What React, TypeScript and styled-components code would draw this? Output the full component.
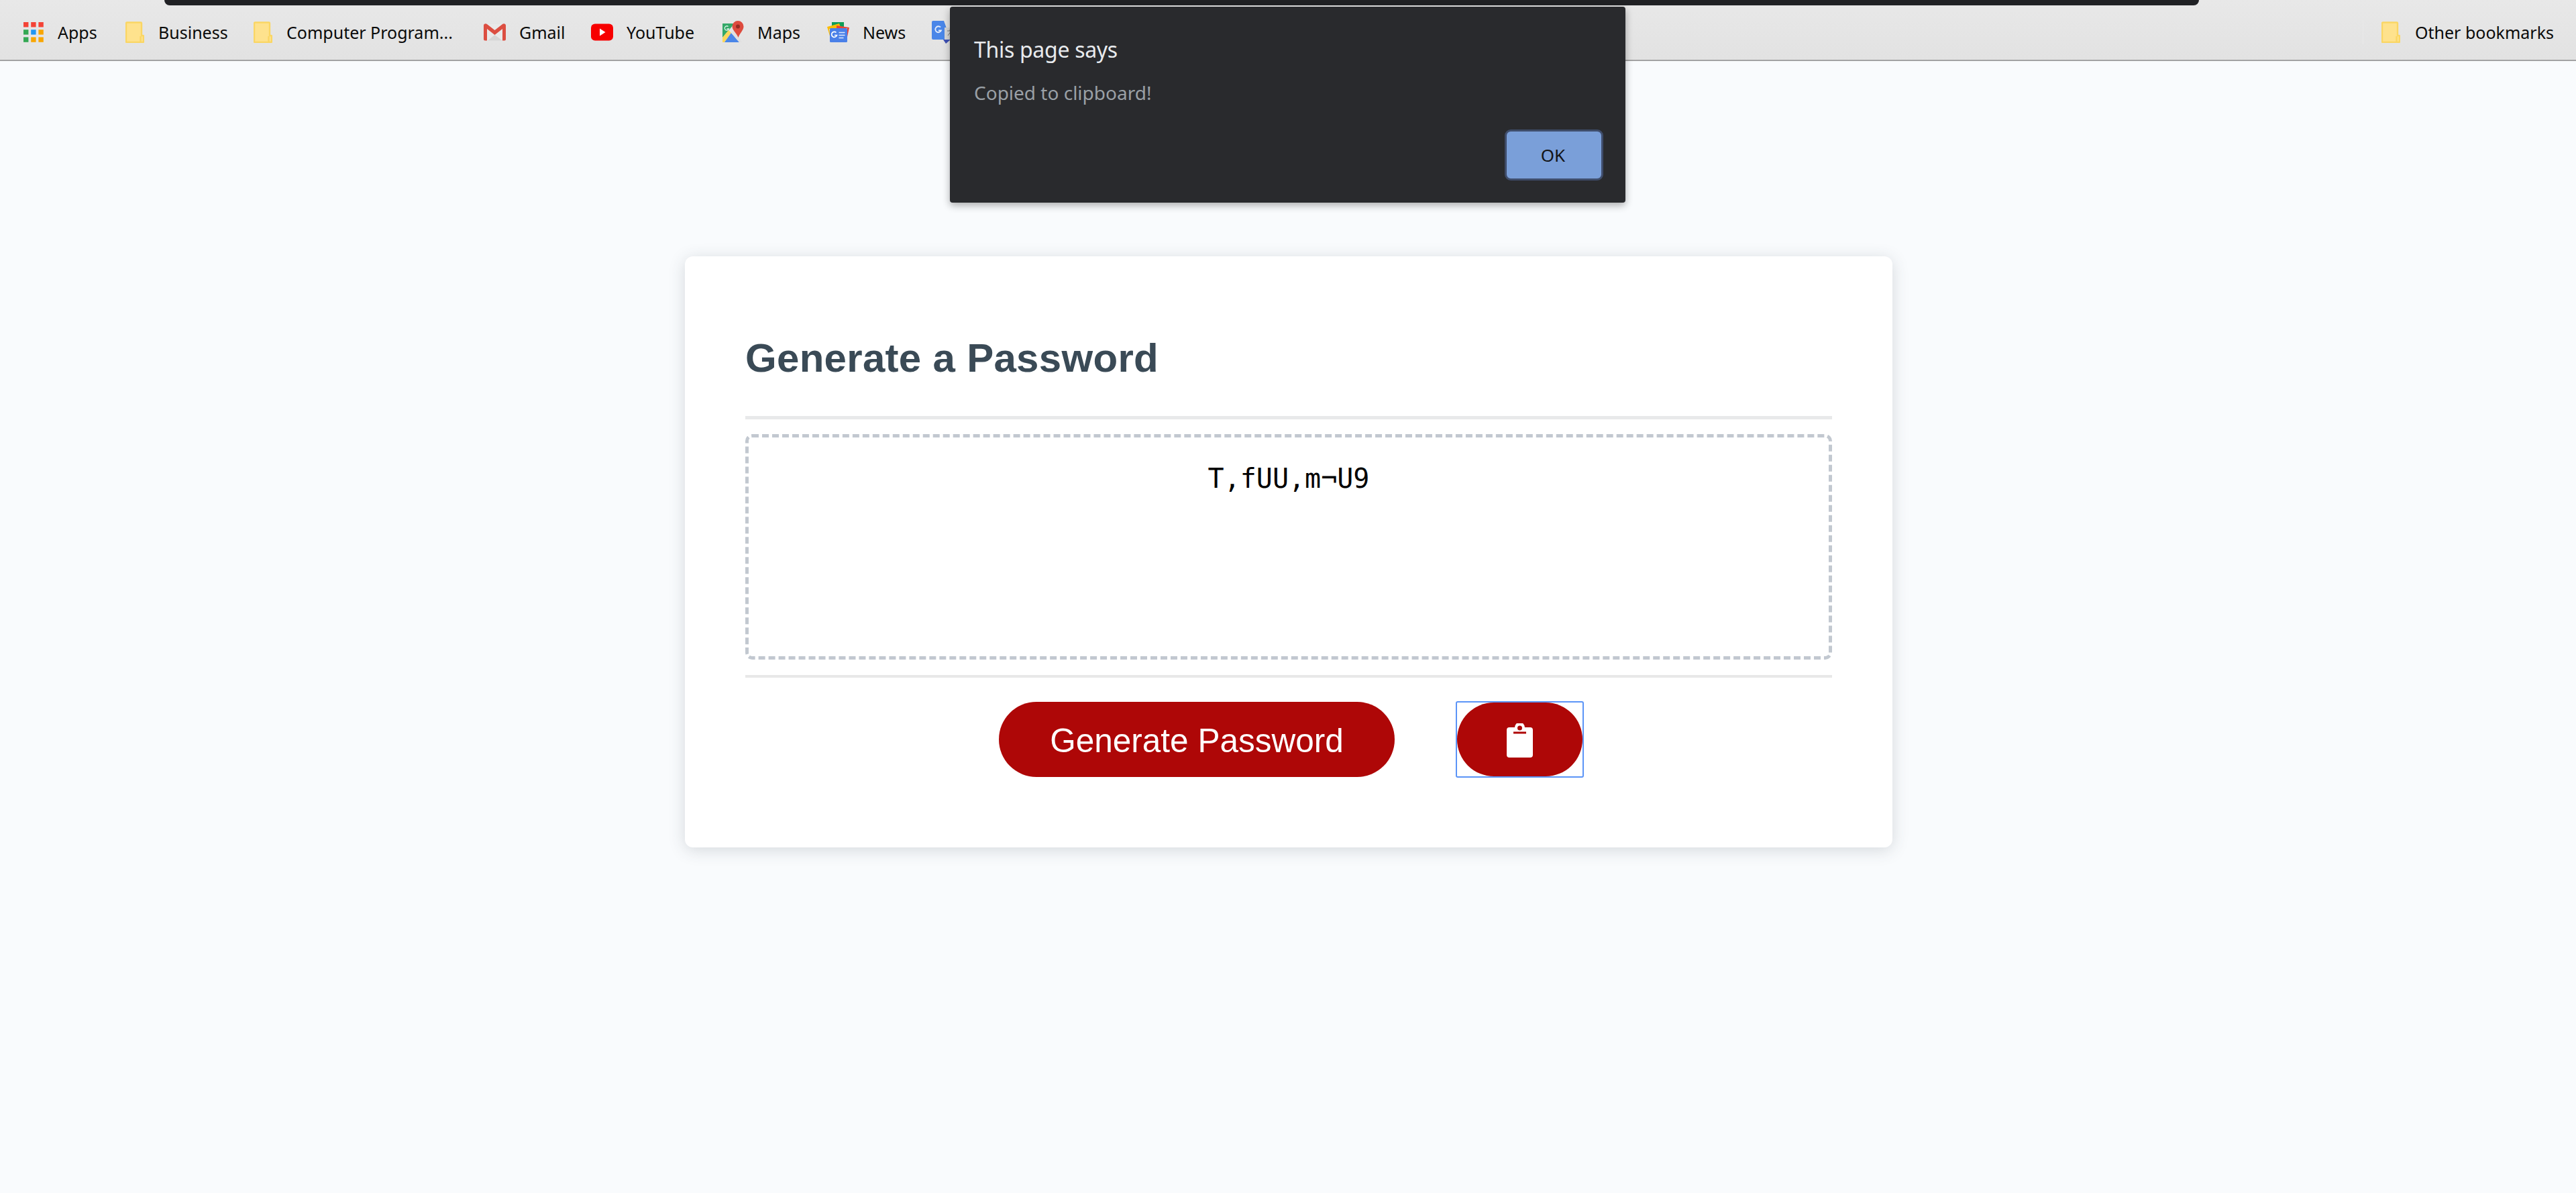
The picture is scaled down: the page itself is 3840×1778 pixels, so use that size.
import React from "react";
import styled, { createGlobalStyle } from "styled-components";

const Global = createGlobalStyle`
  html, body { margin: 0; padding: 0; background: #f9fbfd; }
  #root { min-height: 1778px; }
`;

const Page = styled.div`
  position: relative;
  width: 3840px;
  height: 1778px;
  overflow: hidden;
  background: #f9fbfd;
`;

const Chrome = styled.header`
  height: 89px;
  border-bottom: 2px solid #a3a3a3;
  background: linear-gradient(#e8e8e8, #e2e2e2);
  display: flex;
  flex-direction: column;
`;

const TabEdge = styled.div`
  height: 8px;
  margin: 0 562px 0 245px;
  background: #202124;
  border-radius: 0 0 24px 24px;
`;

const Bookmarks = styled.nav`
  flex: 1;
  display: flex;
  align-items: center;
  padding: 0 33px 2px 35px;
  font-family: "Noto Sans", "Open Sans", sans-serif;
  font-size: 25px;
  color: #0a0a0a;
`;

const Bookmark = styled.div<{ $gap?: number; $w?: number }>`
  display: flex;
  align-items: center;
  flex: none;
  width: ${(p) => p.$w}px;
  gap: ${(p) => p.$gap ?? 20}px;
  white-space: nowrap;
`;

const Label = styled.span`
  line-height: 32px;
`;

const Spacer = styled.div`
  flex: 1;
`;

const Separator = styled.div`
  width: 1px;
  height: 36px;
  background: #e9e9e9;
  margin-right: 27px;
`;

const Main = styled.main`
  display: flex;
  justify-content: center;
  padding: 291px 0 0 2px;
`;

const Card = styled.section`
  width: 1800px;
  height: 881px;
  box-sizing: border-box;
  padding: 115px 90px 0;
  background: #fff;
  border-radius: 12px;
  box-shadow: 0 4px 24px rgba(50, 60, 70, 0.18);
  display: flex;
  flex-direction: column;
`;

const Title = styled.h1`
  margin: 0;
  height: 128px;
  box-sizing: border-box;
  border-bottom: 5px solid #e8e9ea;
  font-family: "Liberation Sans", Arial, sans-serif;
  font-size: 60px;
  letter-spacing: 0.3px;
  line-height: 74px;
  font-weight: 700;
  color: #3a4a56;
`;

const PasswordBox = styled.div`
  margin-top: 22px;
  height: 336px;
  box-sizing: border-box;
  border: 5px dashed #c2c8d0;
  border-radius: 10px;
  padding-top: 38px;
  text-align: center;
  font-family: "DejaVu Sans Mono", "Liberation Mono", monospace;
  font-size: 40px;
  line-height: 47px;
  color: #000;
`;

const Rule = styled.hr`
  margin: 23px 0 0;
  height: 4px;
  border: none;
  background: #e8e8e8;
`;

const Actions = styled.div`
  margin-top: 35px;
  display: flex;
  justify-content: center;
  align-items: center;
  gap: 91px;
  padding-left: 8px;
`;

const Pill = styled.button<{ $w: number; $h: number }>`
  width: ${(p) => p.$w}px;
  height: ${(p) => p.$h}px;
  padding: 2px 0 0;
  border: none;
  border-radius: 56px;
  background: #ae0707;
  color: #fff;
  font-family: "Liberation Sans", Arial, sans-serif;
  font-size: 49.5px;
  display: flex;
  align-items: center;
  justify-content: center;
`;

const Focus = styled.div`
  border: 2px solid #5b94f7;
  border-radius: 3px;
  display: flex;
`;

const Dialog = styled.aside`
  position: absolute;
  left: 1416px;
  top: 10px;
  width: 1007px;
  height: 292px;
  box-sizing: border-box;
  padding: 42px 33px 33px 36px;
  background: #292a2d;
  border-radius: 4px;
  box-shadow: 0 4px 12px rgba(0, 0, 0, 0.32);
  font-family: "Noto Sans", "Open Sans", sans-serif;
  display: flex;
  flex-direction: column;
`;

const DialogTitle = styled.div`
  font-size: 32px;
  line-height: 44px;
  letter-spacing: -0.3px;
  color: #e8eaed;
`;

const DialogText = styled.div`
  margin-top: 22px;
  font-size: 28px;
  line-height: 40px;
  color: #9aa0a6;
`;

const DialogFooter = styled.div`
  margin-top: auto;
  display: flex;
  justify-content: flex-end;
`;

const OkButton = styled.button`
  width: 147px;
  height: 76px;
  padding: 0 3px 0 0;
  box-sizing: border-box;
  border: 3px solid #3f4d6b;
  border-radius: 9px;
  background: #7a9fd9;
  color: #131417;
  font-family: "Noto Sans", "Open Sans", sans-serif;
  font-size: 26px;
`;

const Grid = () => (
  <svg width="30" height="30" viewBox="0 0 30 30">
    {[
      ["#f44336", "#f44336", "#f44336"],
      ["#34a853", "#2196f3", "#f9a602"],
      ["#34a853", "#f9a602", "#f9a602"],
    ].map((row, y) =>
      row.map((c, x) => <rect key={`${x}${y}`} x={x * 11.2} y={y * 11.2} width="7.4" height="7.4" fill={c} />)
    )}
  </svg>
);

const Folder = () => (
  <svg width="28" height="32" viewBox="0 0 28 32">
    <path d="M2 1.5h21a1 1 0 0 1 1 1V21h2a1 1 0 0 1 1 1v8a1 1 0 0 1-1 1H2a1 1 0 0 1-1-1V2.5a1 1 0 0 1 1-1z" fill="#fee28d" stroke="#fad664" strokeWidth="2.4" />
    <path d="M22.5 30V22" stroke="#fad664" strokeWidth="2.4" />
  </svg>
);

const Gmail = () => (
  <svg width="33" height="26" viewBox="0 0 33 26">
    <rect x="1" y="1" width="31" height="24.5" rx="1.5" fill="#e9e9e9" />
    <path d="M6 25.500L16.500 17 28 25.500z" fill="#d6d6d6" />
    <path d="M5 25.500V8L16.500 17 28 8v17.500h3a2 2 0 0 0 2-2V3c0-2.500-3-3.500-5-2L16.500 10 5 1C3 -.5 0 .5 0 3v20.500a2 2 0 0 0 2 2z" fill="#dc4e41" />
  </svg>
);

const YouTube = () => (
  <svg width="33" height="26" viewBox="0 0 33 26">
    <rect x="0" y="0.5" width="33" height="25" rx="6" fill="#f70000" />
    <path d="M13 7.500l8.500 5.500-8.500 5.500z" fill="#fff" />
  </svg>
);

const Maps = () => (
  <svg width="33" height="33" viewBox="0 0 33 33">
    <path d="M1 4h18L1 25z" fill="#34a868" />
    <path d="M1 25L10 14l4 4L4 32H1z" fill="#fbd75b" />
    <path d="M4 32l10-14 12 14z" fill="#4a86e8" />
    <path d="M14 18l5-5 11 19h-4z" fill="#e0e0e0" />
    <path d="M24 0a8.500 8.500 0 0 1 8.500 8.500C32.500 14 27 18 24.500 25 22 18 15.500 14 15.500 8.500A8.500 8.500 0 0 1 24 0z" fill="#dd4b3e" />
    <circle cx="24" cy="8.500" r="3" fill="#962b22" />
    <path d="M9.500 8.500a3.200 3.200 0 1 0 1 3.500H7.500" fill="none" stroke="#dff3e8" strokeWidth="1.300" />
  </svg>
);

const News = () => (
  <svg width="33" height="30" viewBox="0 0 33 30">
    <rect x="7" y="0" width="18" height="10" fill="#0f9d58" />
    <path d="M0 7l18-5 3 8H3l2 14z" fill="#fbbc05" />
    <path d="M14 5l19 3-3 14V9H14z" fill="#ea4335" />
    <rect x="4" y="9" width="26" height="21" rx="1.500" fill="#4a80e8" />
    <path d="M13.500 15.500a4 4 0 1 0 1 4h-3.500" fill="none" stroke="#fff" strokeWidth="1.700" />
    <path d="M17.500 15.500h9M17.500 19.500h9M17.500 23.500h7" stroke="#dfe9fb" strokeWidth="1.700" />
  </svg>
);

const Translate = () => (
  <svg width="32" height="34" viewBox="0 0 32 34">
    <path d="M2 0h16l10 28H2a2 2 0 0 1-2-2V2a2 2 0 0 1 2-2z" fill="#4a86e8" />
    <path d="M13 9.500a4.500 4.500 0 1 0 1 5h-4" fill="none" stroke="#e4edfc" strokeWidth="1.800" />
    <rect x="19" y="10" width="13" height="18" fill="#d9d9d9" />
    <path d="M23 15h8M27 13v2M24 22l5-7" stroke="#777" strokeWidth="1" fill="none" />
    <path d="M17 28h11l-7 6z" fill="#3f51b5" />
  </svg>
);

const Clipboard = () => (
  <svg width="39" height="51" viewBox="0 0 39 51">
    <path
      fillRule="evenodd"
      fill="#fff"
      d="M4 6h8a7.500 7.500 0 0 1 15 0h8a4 4 0 0 1 4 4v37a4 4 0 0 1-4 4H4a4 4 0 0 1-4-4V10a4 4 0 0 1 4-4zM19.500 3.500a3.500 3.500 0 1 0 0 7 3.500 3.500 0 0 0 0-7zM10 12.500v3h19v-3z"
    />
  </svg>
);

const marks: { icon: React.ReactNode; text: string; w: number; gap?: number }[] = [
  { icon: <Grid />, text: "Apps", w: 152, gap: 21 },
  { icon: <Folder />, text: "Business", w: 191, gap: 21 },
  { icon: <Folder />, text: "Computer Program...", w: 343, gap: 21 },
  { icon: <Gmail />, text: "Gmail", w: 160 },
  { icon: <YouTube />, text: "YouTube", w: 195 },
  { icon: <Maps />, text: "Maps", w: 157 },
  { icon: <News />, text: "News", w: 156 },
  { icon: <Translate />, text: "", w: 40 },
];

export default function App() {
  return (
    <Page>
      <Global />
      <Chrome>
        <TabEdge />
        <Bookmarks>
          {marks.map((m, i) => (
            <Bookmark key={i} $w={m.w} $gap={m.gap}>
              {m.icon}
              {m.text && <Label>{m.text}</Label>}
            </Bookmark>
          ))}
          <Spacer />
          <Separator />
          <Bookmark $w={257} $gap={22}>
            <Folder />
            <Label>Other bookmarks</Label>
          </Bookmark>
        </Bookmarks>
      </Chrome>
      <Main>
        <Card>
          <Title>Generate a Password</Title>
          <PasswordBox>T,fUU,m¬U9</PasswordBox>
          <Rule />
          <Actions>
            <Pill $w={590} $h={112}>Generate Password</Pill>
            <Focus>
              <Pill $w={187} $h={110}>
                <Clipboard />
              </Pill>
            </Focus>
          </Actions>
        </Card>
      </Main>
      <Dialog>
        <DialogTitle>This page says</DialogTitle>
        <DialogText>Copied to clipboard!</DialogText>
        <DialogFooter>
          <OkButton>OK</OkButton>
        </DialogFooter>
      </Dialog>
    </Page>
  );
}
